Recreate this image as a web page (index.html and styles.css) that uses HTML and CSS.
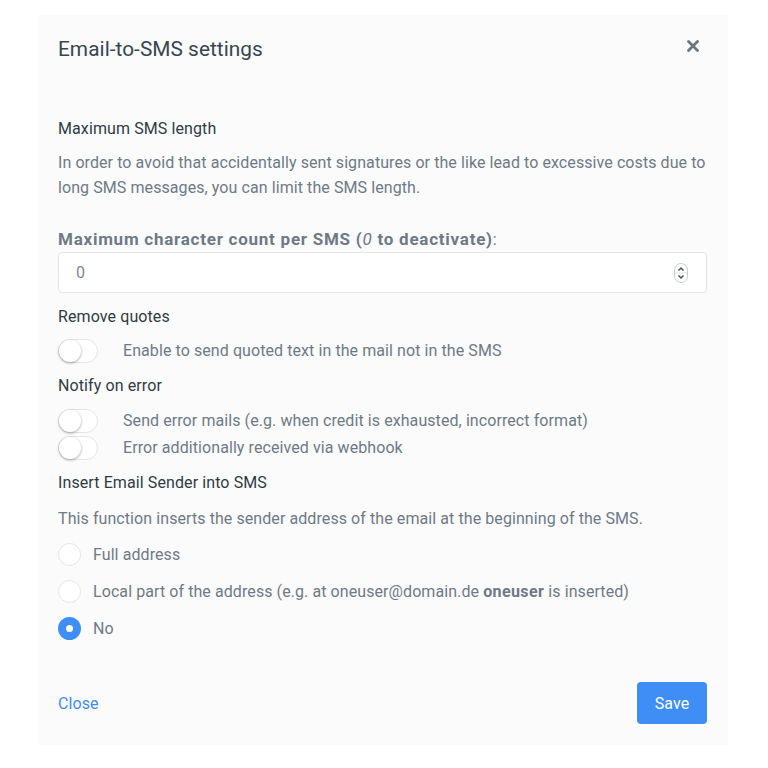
FILE: index.html
```html
<!DOCTYPE html>
<html>
<head>
<meta charset="utf-8">
<link rel="stylesheet" href="styles.css">
</head>
<body>
<div class="modal">
  <div class="header">
    <h1 class="title">Email-to-SMS settings</h1>
    <span class="close-x">
      <svg width="12" height="12" viewBox="0 0 12 12"><path d="M1.5 1.5L10.5 10.5M10.5 1.5L1.5 10.5" stroke="#6a7580" stroke-width="2.8" stroke-linecap="round"/></svg>
    </span>
  </div>
  <div class="body">
    <div class="heading">Maximum SMS length</div>
    <p class="text para">In order to avoid that accidentally sent signatures or the like lead to excessive costs due to long SMS messages, you can limit the SMS length.</p>
    <div class="label"><b>Maximum character count per SMS (<i>0</i> to deactivate)</b>:</div>
    <div class="input">
      <span class="value">0</span>
      <span class="spin">
        <svg width="14" height="20" viewBox="0 0 14 20"><rect x="0.5" y="0.5" width="13" height="19" rx="6.5" fill="none" stroke="#c9ced3"/><line x1="1" y1="10" x2="13" y2="10" stroke="#dde1e4"/><path d="M4.5 7.5L7 5L9.5 7.5M4.5 12.5L7 15L9.5 12.5" fill="none" stroke="#4a525a" stroke-width="1.5"/></svg>
      </span>
    </div>
    <div class="heading h-sm">Remove quotes</div>
    <div class="switch-row"><span class="switch"></span><span class="text">Enable to send quoted text in the mail not in the SMS</span></div>
    <div class="heading h-xs">Notify on error</div>
    <div class="switch-row loose"><span class="switch"></span><span class="text">Send error mails (e.g. when credit is exhausted, incorrect format)</span></div>
    <div class="switch-row tight"><span class="switch"></span><span class="text">Error additionally received via webhook</span></div>
    <div class="heading h-xs">Insert Email Sender into SMS</div>
    <p class="text para2">This function inserts the sender address of the email at the beginning of the SMS.</p>
    <div class="radio-row first"><span class="radio"></span><span class="text">Full address</span></div>
    <div class="radio-row"><span class="radio"></span><span class="text">Local part of the address (e.g. at oneuser@domain.de <b>oneuser</b> is inserted)</span></div>
    <div class="radio-row"><span class="radio checked"></span><span class="text">No</span></div>
  </div>
  <div class="footer">
    <a class="close-link">Close</a>
    <button class="save">Save</button>
  </div>
</div>
</body>
</html>
```
FILE: styles.css
```css
html, body { margin: 0; padding: 0; background: #ffffff; }
body { font-family: Roboto, "Noto Sans", sans-serif; padding: 15px 0 0 38px; }
.modal { background: #fbfbfc; width: 690px; height: 730px; box-sizing: border-box; padding: 0 21px 0 20px; display: flex; flex-direction: column; }
.header { display: flex; justify-content: space-between; align-items: center; height: 68px; }
.title { margin: 0; font-size: 20.8px; font-weight: 400; color: #37464f; letter-spacing: 0.05px; }
.close-x { display: flex; margin-right: 8px; margin-top: -6px; }
.body { padding-top: 36px; flex: 1; }
.heading { font-size: 16px; color: #2f3b43; line-height: 20px; letter-spacing: 0.1px; }
.text { font-size: 16px; color: #6e7a85; line-height: 25px; letter-spacing: 0.08px; }
.para { margin: 11px 0 0 0; }
.label { margin-top: 29px; font-size: 16px; color: #6e7a85; line-height: 20px; }
.label b { font-weight: 700; font-size: 17px; letter-spacing: 0.75px; }
.label i { font-weight: 400; }
.input { margin-top: 2px; height: 41px; box-sizing: border-box; border: 1px solid #e3e6e9; border-radius: 4px; background: #fff; display: flex; align-items: center; justify-content: space-between; padding: 0 18px 0 17px; }
.value { font-size: 16px; color: #7f8891; }
.spin { display: flex; }
.h-sm { margin-top: 14px; }
.h-xs { margin-top: 12px; }
.switch-row { display: flex; align-items: center; gap: 25px; height: 27px; margin-top: 10px; }
.switch-row.loose { margin-top: 11px; }
.switch-row.tight { margin-top: 0; }
.switch { width: 40px; height: 24px; box-sizing: border-box; border: 1px solid #e3e6e9; border-radius: 12px; background: #fff; position: relative; flex: none; }
.switch::after { content: ""; position: absolute; left: 0; top: 0; width: 22px; height: 22px; border-radius: 50%; background: #fff; box-shadow: 0 1px 3px rgba(0,0,0,0.35); }
.para2 { margin: 13px 0 0 0; }
.radio-row { display: flex; align-items: center; gap: 12px; height: 25px; margin-top: 12px; }
.radio-row.first { margin-top: 11px; }
.radio { width: 23px; height: 23px; box-sizing: border-box; border: 1px solid #e3e6e9; border-radius: 50%; background: #fff; flex: none; }
.radio.checked { border: 8px solid #3f8ef5; background: #fff; }
.footer { display: flex; justify-content: space-between; align-items: center; height: 42px; margin-bottom: 21px; }
.close-link { font-size: 16px; color: #3d8ef0; letter-spacing: 0.1px; }
.save { background: #3f8ef5; color: #fff; border: none; border-radius: 4px; font-family: Roboto, sans-serif; font-size: 16px; width: 70px; height: 42px; letter-spacing: 0.1px; }
.text b { font-weight: 700; letter-spacing: 0.4px; }
```
